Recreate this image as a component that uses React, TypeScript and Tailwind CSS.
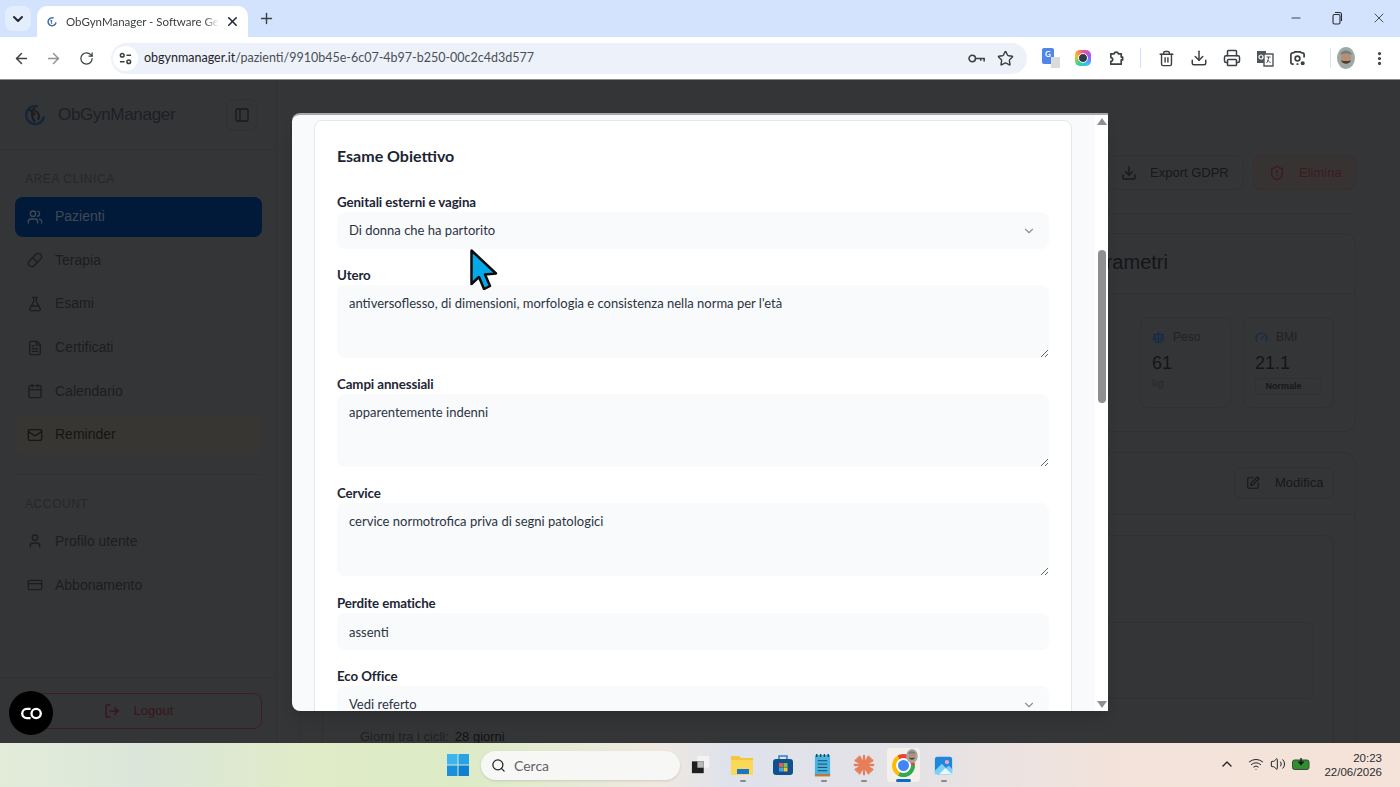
import {
  ArrowLeft,
  ArrowRight,
  Calendar,
  ChevronDown,
  ChevronUp,
  CreditCard,
  Download,
  EllipsisVertical,
  FileText,
  FlaskConical,
  Gauge,
  LogOut,
  Mail,
  Minus,
  PanelLeft,
  Pill,
  Plus,
  Printer,
  RotateCw,
  Scale,
  Search,
  ShieldAlert,
  SquarePen,
  Star,
  Trash2,
  User,
  Users,
  Volume2,
  Wifi,
  X,
} from "lucide-react";

const ui = "font-['Lato','Noto_Sans',sans-serif]";
const arial = "font-['Liberation_Sans',Arial,sans-serif]";

function Logo() {
  return (
    <svg viewBox="0 0 24 24" className="w-6 h-6" fill="none" stroke="#14243a" strokeWidth="2.2">
      <path d="M15 3.500a9 9 0 1 0 6 10" />
      <path d="M12 5c-4 3-4 9 0 14M12 8c4 1 5 5 3 9M6 6l6 6" stroke="#1b1d20" />
    </svg>
  );
}

function Avatar({ size = "w-[18px] h-[22px]" }: { size?: string }) {
  return (
    <svg viewBox="0 0 18 22" className={size}>
      <ellipse cx="9" cy="11" rx="9" ry="11" fill="#9fa8a4" />
      <ellipse cx="9" cy="10" rx="5" ry="6" fill="#b98f72" />
      <path d="M4 13c1 5 9 5 10 0l-2 1H6z" fill="#4a3b32" />
      <path d="M3 8c1-6 11-6 12 0-3-2-9-2-12 0z" fill="#6f8084" />
    </svg>
  );
}

function TabStrip() {
  return (
    <div className={`h-[37px] bg-[#d3e3fd] flex items-end shrink-0 ${ui}`}>
      <div className="w-[26px] h-[25px] ml-[5px] mb-[6px] rounded-lg bg-[#e4edfc] flex items-center justify-center">
        <ChevronDown className="w-4 h-4 text-[#1f2937]" strokeWidth={3} />
      </div>
      <div className="w-[211px] h-[31px] ml-[6px] bg-white rounded-t-[10px] flex items-center pl-[9px] pr-[8px]">
        <svg viewBox="0 0 24 24" className="w-3 h-3 shrink-0" fill="none" stroke="#3f6f9f" strokeWidth="3">
          <path d="M15 4a8 8 0 1 0 5 9" />
          <path d="M12 8c-2 2-2 6 0 8M8 7l4 5" strokeWidth="2" />
        </svg>
        <span className="ml-[8px] text-[11.500px] leading-5 h-5 text-[#3c4043] whitespace-nowrap overflow-hidden w-[154px] [mask-image:linear-gradient(90deg,black_90%,transparent)]">
          ObGynManager - Software Gestionale
        </span>
        <X className="w-[15px] h-[15px] ml-[6px] text-[#1f2937]" strokeWidth={2.5} />
      </div>
      <Plus className="w-[17px] h-[17px] ml-[10px] mb-[10px] text-[#3c4043]" strokeWidth={2} />
      <div className="flex-1" />
      <div className="flex items-center mb-[11px] text-[#2b2d31]">
        <Minus className="w-[14px] h-[14px]" strokeWidth={1.5} />
        <svg viewBox="0 0 14 14" className="w-[14px] h-[14px] ml-[27px]" fill="none" stroke="currentColor" strokeWidth="1.1">
          <rect x="3" y="3.500" width="7" height="9.500" rx="1.500" />
          <path d="M5 1.500h4.500a2 2 0 0 1 2 2V10" />
        </svg>
        <X className="w-[16px] h-[16px] ml-[27px] mr-[13px]" strokeWidth={1.25} />
      </div>
    </div>
  );
}

function Toolbar() {
  const icon = "w-[17px] h-[17px] text-[#3c4043]";
  return (
    <div className={`h-[43px] bg-white border-b border-[#8b8b8b] flex items-center shrink-0 ${ui}`}>
      <ArrowLeft className={`${icon} ml-[13px]`} strokeWidth={2} />
      <ArrowRight className="w-[17px] h-[17px] ml-[15px] text-[#8d9094]" strokeWidth={2} />
      <RotateCw className="w-[15px] h-[15px] ml-[17px] text-[#3c4043]" strokeWidth={2} />
      <div className="w-[916px] h-[31px] ml-[17px] rounded-full bg-[#edf2fa] flex items-center pl-[2px]">
        <div className="w-[25px] h-[25px] rounded-full bg-white flex items-center justify-center">
          <svg viewBox="0 0 14 14" className="w-[13px] h-[13px]" fill="none" stroke="#3c4043" strokeWidth="1.600">
            <circle cx="3.500" cy="3.500" r="2" />
            <path d="M8 3.500h5M1 10.500h5" />
            <circle cx="10.500" cy="10.500" r="2" />
          </svg>
        </div>
        <span className="ml-[6px] text-[12.5px] text-[#1f2328] whitespace-nowrap">
          obgynmanager.it<span className="text-[#4a4f55]">/pazienti/9910b45e-6c07-4b97-b250-00c2c4d3d577</span>
        </span>
        <div className="flex-1" />
        <svg viewBox="0 0 20 12" className="w-[17px] h-[11px]" fill="none" stroke="#3c4043" strokeWidth="1.800">
          <circle cx="5" cy="6" r="3.800" />
          <path d="M9 6h10v3.500M15 6v2.500" />
        </svg>
        <Star className={`${icon} ml-[12px] mr-[13px]`} strokeWidth={2} />
      </div>
      <div className="w-[16px] h-[20px] ml-[15px] relative">
        <div className="w-[12px] h-[16px] bg-[#4f86e8] rounded-[2px] text-white text-[8px] font-bold text-center">G</div>
        <div className="absolute right-[-2px] bottom-0 w-[9px] h-[11px] bg-[#d9dbde]" />
      </div>
      <div className="w-[16px] h-[16px] ml-[17px] rounded-[5px] bg-[conic-gradient(#f4518c,#a855f7,#38bdf8,#34d399,#fbbf24,#f4518c)] flex items-center justify-center">
        <div className="w-[10px] h-[10px] rounded-full bg-[#2e3a4c] border border-white" />
      </div>
      <svg viewBox="0 0 18 18" className="w-[17px] h-[17px] ml-[17px]" fill="none" stroke="#3c4043" strokeWidth="1.800" strokeLinejoin="round">
        <path d="M3 4h3.500a2.300 2.300 0 0 1 4.500 0H14v3.500h1.500v3H14V15H3v-3a2 2 0 0 0 0-4z" />
      </svg>
      <div className="w-px h-[20px] bg-[#d3e3fd] ml-[15px]" />
      <Trash2 className={`${icon} ml-[17px]`} strokeWidth={2} />
      <Download className="w-[18px] h-[18px] ml-[15px] text-[#3c4043]" strokeWidth={2} />
      <Printer className="w-[18px] h-[18px] ml-[15px] text-[#3c4043]" strokeWidth={2} />
      <svg viewBox="0 0 18 18" className="w-[18px] h-[18px] ml-[15px]">
        <path d="M1 2h9v12H1z" fill="#50555b" />
        <path d="M8 5h9v12H8z" fill="#fff" stroke="#50555b" strokeWidth="1.400" />
        <circle cx="5" cy="8" r="2" fill="none" stroke="#fff" strokeWidth="1.200" />
        <path d="M10.500 8h4M12.500 8c0 3-1 5-2 6M11.500 11l3 3" fill="none" stroke="#50555b" strokeWidth="1" />
      </svg>
      <svg viewBox="0 0 18 18" className="w-[17px] h-[17px] ml-[15px]" fill="none" stroke="#3c4043" strokeWidth="1.800">
        <path d="M5 3H4a2 2 0 0 0-2 2v8a2 2 0 0 0 2 2h1M13 3h1a2 2 0 0 1 2 2v3M5 3l1-1h6l1 1M8 15h2" />
        <circle cx="9" cy="9" r="2.500" />
        <circle cx="14.500" cy="14" r="1.300" fill="#3c4043" />
      </svg>
      <div className="w-px h-[20px] bg-[#d3e3fd] ml-[24px]" />
      <div className="ml-[6px]">
        <Avatar />
      </div>
      <EllipsisVertical className="w-[17px] h-[17px] ml-[16px] text-[#3c4043]" strokeWidth={2.5} />
    </div>
  );
}

const clinica = [
  { label: "Pazienti", Icon: Users, active: true },
  { label: "Terapia", Icon: Pill },
  { label: "Esami", Icon: FlaskConical },
  { label: "Certificati", Icon: FileText },
  { label: "Calendario", Icon: Calendar },
  { label: "Reminder", Icon: Mail, warn: true },
];

const account = [
  { label: "Profilo utente", Icon: User },
  { label: "Abbonamento", Icon: CreditCard },
];

type NavProps = { label: string; Icon: typeof Users; active?: boolean; warn?: boolean };

function NavItem({ label, Icon, active, warn }: NavProps) {
  const tone = active ? "bg-[#011a39] text-[#3f4956]" : warn ? "bg-[#383633] text-[#141516]" : "text-[#1c1d20]";
  return (
    <div className={`h-10 rounded-lg flex items-center pl-[12px] text-[14px] ${tone}`}>
      <Icon className="w-4 h-4" strokeWidth={2} />
      <span className="ml-3">{label}</span>
    </div>
  );
}

function Sidebar() {
  return (
    <aside className={`w-[277px] shrink-0 flex flex-col bg-[#343537] border-r border-[#2f3032] ${arial}`}>
      <div className="h-[70px] shrink-0 border-b border-[#303133] flex items-center pl-[23px] pr-[18px]">
        <Logo />
        <span className="ml-[11px] text-[17px] tracking-[-0.3px] text-[#1c2025]">ObGynManager</span>
        <div className="flex-1" />
        <div className="w-8 h-8 rounded-lg border border-[#303133] flex items-center justify-center">
          <PanelLeft className="w-4 h-4 text-[#181a1c]" strokeWidth={2} />
        </div>
      </div>
      <div className="pl-[15px] pr-[14px] pt-[21px]">
        <p className="pl-[10px] h-[16px] leading-4 text-[12px] tracking-[0.6px] text-[#26272a]">AREA CLINICA</p>
        <div className="mt-[9.500px] flex flex-col gap-[3.7px]">
          {clinica.map((item) => (
            <NavItem key={item.label} {...item} />
          ))}
        </div>
      </div>
      <div className="ml-[15px] mr-[14px] mt-[19px] border-t border-[#303133] pt-[21.500px]">
        <p className="pl-[10px] h-[16px] leading-4 text-[12px] tracking-[0.6px] text-[#26272a]">ACCOUNT</p>
        <div className="mt-[9px] flex flex-col gap-[3.7px]">
          {account.map((item) => (
            <NavItem key={item.label} {...item} />
          ))}
        </div>
      </div>
      <div className="flex-1" />
      <div className="h-[66px] border-t border-[#303133] pl-[15px] pr-[14px] pt-[15px]">
        <div className="h-[36px] rounded-lg border border-[#3f1c22] flex items-center justify-center gap-[14px] text-[13px] text-[#3a1419]">
          <LogOut className="w-4 h-4" strokeWidth={2} />
          Logout
        </div>
      </div>
    </aside>
  );
}

function Stat({ Icon, label, value, unit, badge }: { Icon: typeof Scale; label: string; value: string; unit?: string; badge?: string }) {
  return (
    <div className="w-[91px] h-[91px] rounded-lg border border-[#303133] pl-[11px] pt-[10px]">
      <div className="flex items-center gap-2 text-[12px] text-[#202226]">
        <Icon className="w-[13px] h-[13px] text-[#0e2a4d]" strokeWidth={2} />
        {label}
      </div>
      <p className="mt-[5px] text-[18px] leading-6 text-[#141517]">{value}</p>
      {unit && <p className="text-[11px] text-[#28292c]">{unit}</p>}
      {badge && (
        <span className="block mt-[3px] w-[67px] h-[17px] leading-[15px] pr-[10px] rounded border border-[#303133] text-center text-[9px] font-bold text-[#17181a]">
          {badge}
        </span>
      )}
    </div>
  );
}

function PageBehind() {
  return (
    <main className={`flex-1 min-w-0 bg-[#343537] pl-[23px] pr-[44px] overflow-hidden ${arial}`}>
      <div className="h-[134px] pt-[75px] border-b border-[#303133] flex justify-end gap-[9px]">
        <div className="w-[137px] h-[35px] rounded-lg border border-[#303133] flex items-center pl-[13px] text-[13px] text-[#17181a]">
          <Download className="w-4 h-4" strokeWidth={2} />
          <span className="ml-[13px]">Export GDPR</span>
        </div>
        <div className="w-[103px] h-[35px] rounded-lg border border-[#3a2e2e] bg-[#383333] flex items-center pl-[15px] text-[13px] text-[#3d1a1f]">
          <ShieldAlert className="w-4 h-4" strokeWidth={2} />
          <span className="ml-[14px]">Elimina</span>
        </div>
      </div>
      <section className="mt-[19px] h-[199px] rounded-xl border border-[#303133]">
        <div className="h-[60px] pt-[13px] pl-[715px] text-[20px] text-[#141517] whitespace-nowrap border-b border-[#303133]">
          Vitali e Parametri
        </div>
        <div className="mt-[23px] pr-[21px] flex justify-end gap-[12px]">
          <Stat Icon={Scale} label="Peso" value="61" unit="kg" />
          <Stat Icon={Gauge} label="BMI" value="21.1" badge="Normale" />
        </div>
      </section>
      <section className="mt-[20px] h-[400px] rounded-xl border border-[#303133]">
        <div className="h-[62px] border-b border-[#303133] flex justify-end items-start pt-[14px] pr-[21px]">
          <div className="w-[100px] h-[32px] rounded-lg border border-[#303133] flex items-center pl-[11px] text-[13px] text-[#17181a]">
            <SquarePen className="w-[14px] h-[14px]" strokeWidth={2} />
            <span className="ml-[15px]">Modifica</span>
          </div>
        </div>
        <div className="mx-[21px] mt-[20px] h-[300px] rounded-lg border border-[#303133] pl-[37px] pr-[19px] pt-[86px]">
          <div className="h-[77px] rounded-lg border border-[#303133]" />
          <p className="mt-[28px] h-5 leading-5 text-[13px] text-[#1e1f22]">
            Giorni tra i cicli:
            <span className="ml-[6px] text-[#101113]">28 giorni</span>
          </p>
        </div>
      </section>
    </main>
  );
}

function Field({ label, className = "", children }: { label: string; className?: string; children: React.ReactNode }) {
  return (
    <div className={`mb-4 ${className}`}>
      <p className="h-5 leading-5 text-[13.300px] font-bold text-[#1c2536] tracking-[-0.1px]">{label}</p>
      {children}
    </div>
  );
}

const fieldBox = "block w-full rounded-lg bg-[#f9fafb] px-3 text-[13px] text-[#2b3442] outline-none";

function SelectBox({ value }: { value: string }) {
  return (
    <div className={`${fieldBox} h-[37px] flex items-center justify-between pr-[13px]`}>
      {value}
      <ChevronDown className="w-[14px] h-[14px] text-[#8b919a]" strokeWidth={2} />
    </div>
  );
}

function AreaBox({ value }: { value: string }) {
  return <textarea readOnly defaultValue={value} className={`${fieldBox} h-[73px] py-[9px] resize-y`} />;
}

function Modal() {
  return (
    <div className={`absolute left-[292px] top-[113px] w-[816px] h-[598px] rounded-l-lg bg-[#f8fafc] border-t-2 border-[#a8a8a8] shadow-lg flex overflow-hidden ${ui}`}>
      <div className="flex-1 min-w-0 px-[22px] pt-[5px] overflow-hidden">
        <div className="w-[758px] bg-white border border-[#e5e7eb] rounded-t-lg px-[22px] pt-[21px] h-[700px]">
          <h2 className="h-7 leading-7 text-[16px] font-bold text-[#1a2433]">Esame Obiettivo</h2>
          <div className="mt-[22px]">
            <Field label="Genitali esterni e vagina">
              <SelectBox value="Di donna che ha partorito" />
            </Field>
            <Field label="Utero">
              <AreaBox value="antiversoflesso, di dimensioni, morfologia e consistenza nella norma per l'età" />
            </Field>
            <Field label="Campi annessiali">
              <AreaBox value="apparentemente indenni" />
            </Field>
            <Field label="Cervice">
              <AreaBox value="cervice normotrofica priva di segni patologici" />
            </Field>
            <Field label="Perdite ematiche" className="pt-px">
              <input readOnly defaultValue="assenti" className={`${fieldBox} h-[37px]`} />
            </Field>
            <Field label="Eco Office">
              <SelectBox value="Vedi referto" />
            </Field>
          </div>
        </div>
      </div>
      <div className="w-[13px] shrink-0 bg-white flex flex-col items-center pt-[3px] pb-[3px]">
        <div className="w-0 h-0 border-x-[5px] border-x-transparent border-b-[7px] border-b-[#8f8f8f]" />
        <div className="mt-[125px] w-2 h-[153px] rounded-full bg-[#8f8f8f]" />
        <div className="flex-1" />
        <div className="w-0 h-0 border-x-[5px] border-x-transparent border-t-[7px] border-t-[#8f8f8f]" />
      </div>
    </div>
  );
}

function TaskbarApps() {
  return (
    <div className="flex items-center absolute left-[447px] top-[5px]">
      <svg viewBox="0 0 22 22" className="w-[22px] h-[22px]">
        <path d="M0 0h10.500v10.500H0z" fill="#3cb4ee" />
        <path d="M11.500 0H22v10.500H11.500z" fill="#27a2e6" />
        <path d="M0 11.500h10.500V22H0z" fill="#1a8fde" />
        <path d="M11.500 11.500H22V22H11.500z" fill="#0f7fd3" />
      </svg>
      <div className="ml-[12px] w-[199px] h-[29px] rounded-full bg-[#f7f7f6] shadow-sm flex items-center pl-[10px] text-[14px] text-[#5f6368]">
        <Search className="w-[15px] h-[15px] text-[#1f2328]" strokeWidth={2} />
        <span className="ml-[8px]">Cerca</span>
      </div>
      <svg viewBox="0 0 22 22" className="w-[20px] h-[20px] ml-[11px]">
        <path d="M7 1h13v13H7z" fill="#f3f3f3" />
        <path d="M1 7h13v13H1z" fill="#1d1d1d" />
        <path d="M7 7h7v7H7z" fill="#b9b9b9" />
      </svg>
      <svg viewBox="0 0 24 22" className="w-[24px] h-[22px] ml-[19px]">
        <path d="M1 2h8l2 2h12v17H1z" fill="#f5c53c" />
        <path d="M1 6h22v15H1z" fill="#fbd858" />
        <path d="M7 15h12v5H7z" fill="#1b74c9" />
      </svg>
      <svg viewBox="0 0 22 22" className="w-[22px] h-[22px] ml-[18px]">
        <path d="M7 5V2h8v3" fill="none" stroke="#2d7fc1" strokeWidth="1.500" />
        <rect x="1" y="5" width="20" height="16" rx="3" fill="#11508f" />
        <path d="M7 9h4v4H7z" fill="#ef5a3c" />
        <path d="M11.500 9h4v4h-4z" fill="#7cc144" />
        <path d="M7 13.500h4v4H7z" fill="#35a6ea" />
        <path d="M11.500 13.500h4v4h-4z" fill="#fbc02d" />
      </svg>
      <svg viewBox="0 0 20 26" className="w-[19px] h-[25px] ml-[19px]">
        <rect x="2" y="2" width="16" height="21" fill="#49b4e0" />
        <path d="M2 22h16v2.500H2z" fill="#b97a3c" />
        <path d="M5 8h10M5 11.500h10M5 15h10M5 18.500h10" stroke="#17455f" strokeWidth="1" />
        <path d="M4 1v3M8 1v3M12 1v3M16 1v3" stroke="#17455f" strokeWidth="1.500" />
      </svg>
      <svg viewBox="0 0 24 24" className="w-[22px] h-[22px] ml-[21px]" stroke="#e57f5b" strokeWidth="2.600" strokeLinecap="round">
        <path d="M12 2v20M2 12h20M5 5l14 14M19 5L5 19M7 3l10 18M17 3L7 21M3 7l18 10M21 7L3 17" />
      </svg>
      <div className="w-[33px] h-[34px] ml-[12px] rounded bg-[#f6f0ec] flex items-center justify-center relative">
        <div className="w-[23px] h-[23px] rounded-full bg-[conic-gradient(from_-30deg,#ea4335_0_33%,#34a853_33%_66%,#fbbc05_66%_100%)] flex items-center justify-center">
          <div className="w-[11px] h-[11px] rounded-full bg-[#4285f4] border-2 border-white box-content" />
        </div>
        <div className="absolute right-[1px] top-[1px]">
          <Avatar size="w-[14px] h-[14px]" />
        </div>
      </div>
      <svg viewBox="0 0 22 22" className="w-[19px] h-[19px] ml-[14px]">
        <rect x="1" y="1" width="20" height="20" rx="3" fill="#1f87dd" />
        <path d="M1 17l8-8 5 5 3-3 4 4v6H1z" fill="#7ad0f7" />
        <path d="M6 21l7-7 8 7z" fill="#e8f6fd" />
        <circle cx="15" cy="7" r="2.500" fill="#f5a3bd" />
      </svg>
    </div>
  );
}

function Taskbar() {
  return (
    <footer className={`h-[44px] shrink-0 relative flex items-center justify-end bg-[linear-gradient(90deg,#e3ecd9_0%,#dbe6da_10%,#e0ebc8_22%,#dcebc6_33%,#f0e9e1_47%,#dfe2ec_52%,#e4e2e6_65%,#f3e3da_80%,#f5e3d9_100%)] ${ui}`}>
      <TaskbarApps />
      <div className="absolute left-[740px] top-[37px] w-[6px] h-[2px] rounded bg-[#8a8a8a]" />
      <div className="absolute left-[821px] top-[37px] w-[6px] h-[2px] rounded bg-[#8a8a8a]" />
      <div className="absolute left-[861px] top-[37px] w-[6px] h-[2px] rounded bg-[#8a8a8a]" />
      <div className="absolute left-[896px] top-[36px] w-[15px] h-[3px] rounded bg-[#0f6cbd]" />
      <div className="absolute left-[941px] top-[37px] w-[6px] h-[2px] rounded bg-[#8a8a8a]" />
      <ChevronUp className="w-[16px] h-[16px] text-[#1f2328] mb-[2px]" strokeWidth={2} />
      <Wifi className="w-[16px] h-[16px] ml-[13px] text-[#1f2328] mb-[2px]" strokeWidth={1.5} />
      <Volume2 className="w-[16px] h-[16px] ml-[6px] text-[#1f2328] mb-[2px]" strokeWidth={1.5} />
      <svg viewBox="0 0 18 12" className="w-[18px] h-[12px] ml-[6px] mb-[2px]">
        <rect x="0.500" y="2" width="16.500" height="9.500" rx="2" fill="#2f8f2f" stroke="#3d4a3d" />
        <path d="M9 0v5M6.500 3.500L9 6.500l2.500-3" stroke="#111" strokeWidth="1.300" fill="none" />
      </svg>
      <div className={`ml-[12px] mr-[18px] w-[60px] text-right text-[11.500px] leading-[14px] text-[#2b2d31] ${arial}`}>
        <p>20:23</p>
        <p>22/06/2026</p>
      </div>
    </footer>
  );
}

export default function App() {
  return (
    <div className="relative w-[1400px] h-[787px] overflow-hidden flex flex-col bg-[#343537]">
      <TabStrip />
      <Toolbar />
      <div className="flex-1 min-h-0 flex">
        <Sidebar />
        <PageBehind />
      </div>
      <Taskbar />
      <Modal />
      {/* floating widget */}
      <div className="absolute left-[9px] top-[691px] w-11 h-11 rounded-full bg-black flex items-center justify-center">
        <svg viewBox="0 0 24 14" className="w-[23px] h-[13px]" fill="none" stroke="white" strokeWidth="2.500">
          <path d="M11 2H7a5 5 0 0 0 0 10h4" />
          <circle cx="17" cy="7" r="5" />
        </svg>
      </div>
      {/* mouse pointer */}
      <svg viewBox="0 0 28 41" className="absolute left-[470px] top-[249px] w-[28px] h-[41px]">
        <path d="M1.500 1.500V35l7.500-7 5 12 6-3-5-11.500 11-1z" fill="#03a9e8" stroke="#0b0b0b" strokeWidth="2.500" strokeLinejoin="round" />
      </svg>
    </div>
  );
}
